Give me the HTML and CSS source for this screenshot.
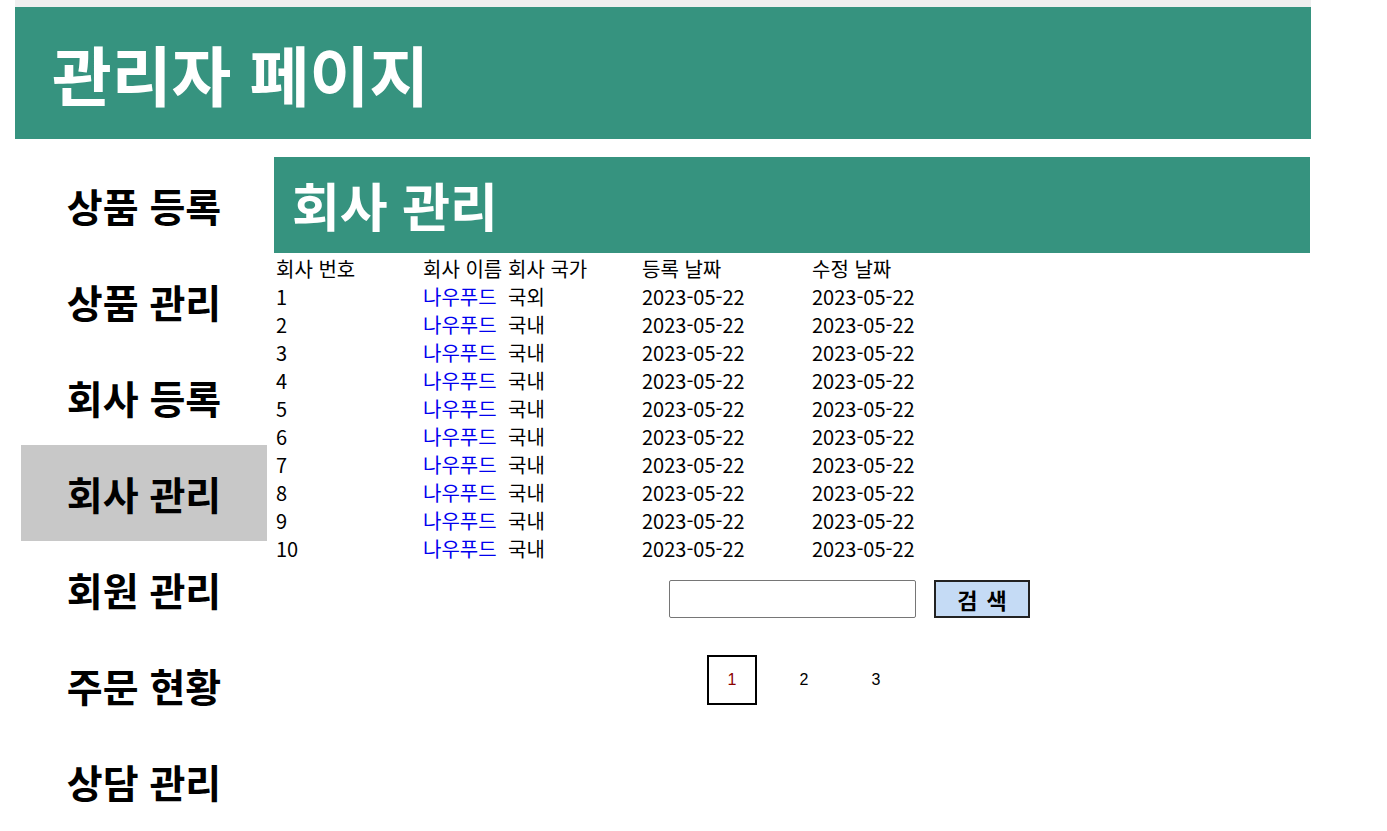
FILE: index.html
```html
<!DOCTYPE html>
<html lang="ko">
<head>
    <meta charset="UTF-8">
    <meta name="viewport" content="width=device-width, initial-scale=1.0">
    <title>관리자 페이지</title>
    <link rel="stylesheet" href="styles.css">
</head>
<body>

<div class="wrap">
    <div class="top-bar"></div>
    <h1 class="page-title">관리자 페이지</h1>

    <div class="layout">
        <!-- 왼쪽 메뉴 -->
        <ul class="side-menu">
            <li>상품 등록</li>
            <li>상품 관리</li>
            <li>회사 등록</li>
            <li class="active">회사 관리</li>
            <li>회원 관리</li>
            <li>주문 현황</li>
            <li>상담 관리</li>
        </ul>

        <div class="content">
            <h2 class="section-title">회사 관리</h2>

            <table class="company-table">
                <thead>
                    <tr>
                        <td class="c-no">회사 번호</td>
                        <td class="c-name">회사 이름</td>
                        <td class="c-country">회사 국가</td>
                        <td class="c-reg">등록 날짜</td>
                        <td class="c-mod">수정 날짜</td>
                    </tr>
                </thead>
                <tbody>
                    <tr><td>1</td><td><a href="#">나우푸드</a></td><td>국외</td><td>2023-05-22</td><td>2023-05-22</td></tr>
                    <tr><td>2</td><td><a href="#">나우푸드</a></td><td>국내</td><td>2023-05-22</td><td>2023-05-22</td></tr>
                    <tr><td>3</td><td><a href="#">나우푸드</a></td><td>국내</td><td>2023-05-22</td><td>2023-05-22</td></tr>
                    <tr><td>4</td><td><a href="#">나우푸드</a></td><td>국내</td><td>2023-05-22</td><td>2023-05-22</td></tr>
                    <tr><td>5</td><td><a href="#">나우푸드</a></td><td>국내</td><td>2023-05-22</td><td>2023-05-22</td></tr>
                    <tr><td>6</td><td><a href="#">나우푸드</a></td><td>국내</td><td>2023-05-22</td><td>2023-05-22</td></tr>
                    <tr><td>7</td><td><a href="#">나우푸드</a></td><td>국내</td><td>2023-05-22</td><td>2023-05-22</td></tr>
                    <tr><td>8</td><td><a href="#">나우푸드</a></td><td>국내</td><td>2023-05-22</td><td>2023-05-22</td></tr>
                    <tr><td>9</td><td><a href="#">나우푸드</a></td><td>국내</td><td>2023-05-22</td><td>2023-05-22</td></tr>
                    <tr><td>10</td><td><a href="#">나우푸드</a></td><td>국내</td><td>2023-05-22</td><td>2023-05-22</td></tr>
                </tbody>
            </table>

            <!-- 검색 -->
            <div class="search-row">
                <input type="text" class="search-input">
                <button class="search-button">검 색</button>
            </div>

            <!-- 페이지 번호 -->
            <div class="paging">
                <a href="#" class="page current">1</a>
                <a href="#" class="page">2</a>
                <a href="#" class="page">3</a>
            </div>
        </div>
    </div>
</div>

</body>
</html>
```

FILE: styles.css
```css
body {
    margin: 0;
    font-family: "Noto Sans CJK KR", "Noto Sans", sans-serif;
    color: #000;
    background-color: #fff;
}
.wrap {
    width: 1296px;
    margin-left: 15px;
}
.top-bar {
    height: 7px;
    background-color: #efefef;
}
.page-title {
    margin: 0;
    height: 132px;
    line-height: 132px;
    padding-left: 37px;
    background-color: #36937f;
    color: white;
    font-size: 65px;
    font-weight: bold;
}
.layout {
    display: flex;
    margin-top: 18px;
    gap: 7px;
    padding-left: 6px;
}
.side-menu {
    list-style: none;
    margin: 0;
    padding: 0;
    width: 246px;
    flex-shrink: 0;
}
.side-menu li {
    height: 96px;
    line-height: 96px;
    text-align: center;
    font-size: 39px;
    font-weight: bold;
}
.side-menu li.active {
    background-color: #c8c8c8;
}
.content {
    width: 1036px;
}
.section-title {
    margin: 0;
    height: 96px;
    line-height: 96px;
    padding-left: 18px;
    background-color: #36937f;
    color: white;
    font-size: 52px;
    font-weight: bold;
}
.company-table {
    border-collapse: separate;
    border-spacing: 0;
    margin-left: 2px;
    font-size: 20px;
    margin-top: 1px;
}
.company-table td {
    padding: 0;
    height: 28px;
    line-height: 28px;
    white-space: nowrap;
}
.company-table thead td {
    height: 29px;
}
.c-no { width: 147px; }
.c-name { width: 85px; }
.c-country { width: 134px; }
.c-reg { width: 170px; }
.company-table a {
    color: #0000ee;
    text-decoration: none;
}
.search-row {
    display: flex;
    gap: 18px;
    margin-top: 17px;
    margin-left: 395px;
}
.search-input {
    width: 247px;
    height: 38px;
    box-sizing: border-box;
    border: 1px solid #767676;
    border-radius: 2px;
}
.search-button {
    width: 96px;
    height: 38px;
    box-sizing: border-box;
    background-color: #c5dbf5;
    border: 2px solid #222;
    font-family: inherit;
    font-size: 22px;
    font-weight: bold;
    padding: 0;
    line-height: 32px;
    word-spacing: 3px;
}
.paging {
    display: flex;
    align-items: center;
    margin-top: 37px;
    margin-left: 433px;
}
.page {
    width: 50px;
    height: 50px;
    line-height: 50px;
    text-align: center;
    color: black;
    text-decoration: none;
    font-family: "Liberation Sans", Arial, sans-serif;
    font-size: 16px;
    margin-right: 22px;
}
.page.current {
    box-sizing: border-box;
    border: 2px solid black;
    line-height: 46px;
    color: #8b0000;
}
```
